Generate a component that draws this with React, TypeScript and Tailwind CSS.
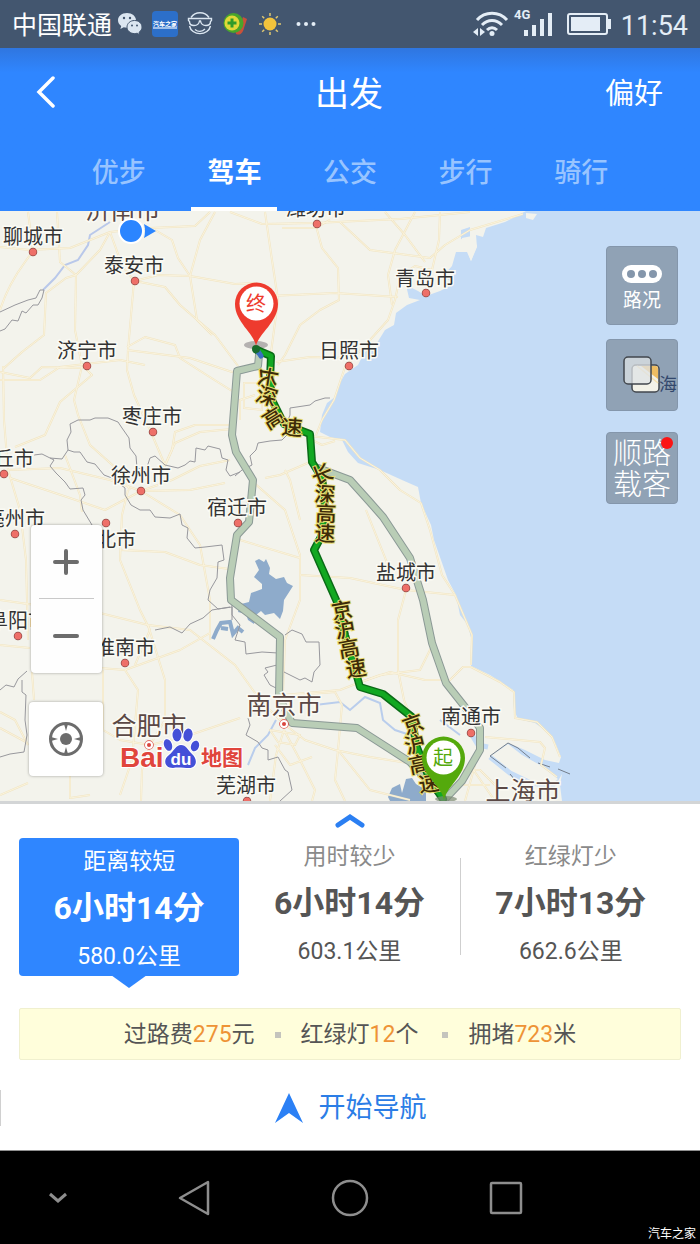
import React, { useState } from "react";
import clsx from "clsx";

const TABS = ["优步", "驾车", "公交", "步行", "骑行"];

const PLANS = [
  { label: "距离较短", time: "6小时14分", distance: "580.0公里" },
  { label: "用时较少", time: "6小时14分", distance: "603.1公里" },
  { label: "红绿灯少", time: "7小时13分", distance: "662.6公里" },
];

// x / y is the middle of the name, dot is the marker below it
const CITIES = [
  { name: "聊城市", x: 33, y: 244, dot: [33, 252] },
  { name: "潍坊市", x: 316, y: 216, dot: [317, 224] },
  { name: "泰安市", x: 134, y: 273, dot: [135, 281] },
  { name: "青岛市", x: 425, y: 286, dot: [426, 293] },
  { name: "日照市", x: 349, y: 358, dot: [349, 366] },
  { name: "济宁市", x: 87, y: 358, dot: [87, 366] },
  { name: "枣庄市", x: 152, y: 424, dot: [153, 432] },
  { name: "商丘市", x: 4, y: 466, dot: [4, 474] },
  { name: "徐州市", x: 141, y: 483, dot: [141, 491] },
  { name: "亳州市", x: 15, y: 526, dot: [15, 534] },
  { name: "宿迁市", x: 237, y: 515, dot: [238, 523] },
  { name: "淮北市", x: 106, y: 547, dot: [106, 523] },
  { name: "盐城市", x: 406, y: 580, dot: [406, 588] },
  { name: "淮南市", x: 125, y: 655, dot: [125, 663] },
  { name: "阜阳市", x: 18, y: 628, dot: [18, 636] },
  { name: "南通市", x: 471, y: 724, dot: [471, 733] },
  { name: "芜湖市", x: 246, y: 793, dot: [247, 801] },
];

const CAPITALS = [
  { name: "济南市", x: 123, y: 219 },
  { name: "南京市", x: 284, y: 714, dot: [284, 724] },
  { name: "合肥市", x: 149, y: 735, dot: [149, 745] },
  { name: "上海市", x: 523, y: 800 },
];

const ROAD_NAMES: [string, number, number, number][] = [
  ["长", 268, 377, 100],
  ["深", 267, 396, 18],
  ["高", 273, 418, -32],
  ["速", 292, 427, 4],
  ["长", 322, 474, -22],
  ["深", 325, 494, 4],
  ["高", 326, 513, 2],
  ["速", 325, 533, 2],
  ["京", 342, 610, -10],
  ["沪", 345, 629, -10],
  ["高", 349, 648, -10],
  ["速", 356, 668, -10],
  ["京", 413, 724, -20],
  ["沪", 415, 744, -14],
  ["高", 419, 764, -12],
  ["速", 429, 783, -8],
];

const ROADS = [
  "M0 247 L30 250 L70 248 L110 232 L150 228 L195 226 L210 212",
  "M0 310 Q8 285 25 262 L33 251 L28 212",
  "M57 212 L60 262 L76 275 L75 330 L82 366 L74 400 L78 415 L90 445 L118 470 L130 490",
  "M110 232 L100 250 L76 275 L66 278 L46 293 L44 335 L22 352 L3 369",
  "M110 232 L122 265 L134 281 L128 350 L127 370 L134 395 L150 430 L165 465",
  "M127 347 L145 337 L175 345 L180 358 L205 374 L232 391",
  "M127 350 L190 358 L232 372 L258 366",
  "M135 281 L165 287 L180 305 L195 318 L215 335 L238 366",
  "M135 281 L158 275 L190 276 L235 284 L255 283",
  "M155 230 L172 240 L178 258 L190 276 L197 320 L212 335",
  "M215 212 L200 240 L190 276",
  "M265 212 L272 260 L278 300 L270 360",
  "M230 212 L262 224 L315 223 L400 219 L470 212",
  "M282 228 L315 228 L330 220",
  "M316 226 L322 248 L338 268 L339 300 L320 310 L300 325 L285 355 L278 365",
  "M270 296 L335 293 L398 297",
  "M440 212 L439 240 L432 270 L415 266 L400 276 L395 300 L388 320 L370 340 L345 367 L334 400 L322 420 L316 435",
  "M340 222 L370 250 L430 258 L445 245 L470 230 L523 214",
  "M385 212 L405 235 L425 262",
  "M415 212 L395 250 L388 275 L392 305",
  "M276 362 L310 357 L345 358",
  "M0 380 L40 380 L60 367 L120 360 L145 365",
  "M0 372 L30 378 L42 367 L85 368 L92 375 L60 402 L45 435 L15 447",
  "M3 366 L4 420 L8 470 L20 510 L26 560 L28 640",
  "M8 470 L60 468 L110 480 L141 491 L172 480 L200 466 L230 460",
  "M10 478 L70 498 L105 510 L141 491 L190 490 L225 483",
  "M65 455 L80 495 L82 512",
  "M232 425 L195 425 L175 432 L172 450 L163 470",
  "M165 465 L175 443 L200 432 L232 429",
  "M141 491 L180 515 L200 545 L210 600 L210 640",
  "M128 490 L122 515 L120 560 L140 610 L150 630 L135 665",
  "M120 550 L165 552 L200 565 L229 569",
  "M0 600 L28 604 L100 613 L148 625 L190 630 L235 665 L260 700 L284 724",
  "M0 645 L30 648 M100 668 L125 670 L180 650 L210 633",
  "M148 625 L165 680 L165 720 L150 745",
  "M125 670 L138 690 L132 760 L120 795 M150 745 L142 770 L141 801",
  "M32 672 L34 700 M70 776 L70 798 L90 795 M0 795 L28 783",
  "M0 728 L26 742 M0 712 L15 720 L28 745",
  "M103 670 L103 730 L120 740 L150 745 L190 735 L240 718",
  "M244 383 L262 383 L262 410 L244 408 Z M255 395 L240 400 L240 420",
  "M310 436 L345 440 L360 458 L380 470 L400 490 L421 503 L430 530 L442 575 L455 595 L472 635 L471 665",
  "M310 462 L280 475 L265 478 M312 440 L322 445 L335 441",
  "M253 482 L285 510 L300 555 L300 600 L285 640 L282 720",
  "M240 540 L300 558 M300 575 L350 578 L406 590 L455 595",
  "M300 520 L290 480 L285 470 M366 510 L380 545 L390 570",
  "M406 590 L398 620 L398 670 L404 700 L420 740",
  "M435 640 L420 670 L380 675 L358 683 L340 690 L283 695",
  "M284 696 L335 692 L342 705 L338 750 L335 780 L345 801",
  "M284 724 L305 740 L335 750 L370 757 L420 765 L445 795",
  "M358 683 L390 672 L425 680 L450 680 L463 667 L471 667",
  "M284 730 L276 755 L270 801 M284 730 L300 760 L315 790 L312 801",
  "M270 730 L300 735 L295 745 L278 742 Z",
  "M338 750 L370 790 L410 800 M312 757 L290 765 L275 745",
  "M471 667 L500 682 L514 692 L515 718 L537 722 L552 737 L560 757",
  "M485 737 L540 742 L545 748 L541 765 L557 777",
  "M455 770 L480 770 L500 790 M450 785 L490 785 M470 765 L495 801 M475 765 L465 801",
];

const BORDERS = [
  "M0 331 L5 329 L12 320 L18 321 L22 311 L26 313 L33 305 L38 305 L42 298 L44 290 L40 290 L36 298 L28 300 L15 305 L0 312",
  "M34 455 L42 454 L50 458 L62 459 L68 450 L67 440 L71 432 L70 424 L78 420 L90 420 L95 418 L108 418 L118 422 L122 428 L129 438 L130 448 L136 456 L137 468 L146 470 L150 458 L155 456 L165 465 L178 468 L185 465 L190 461 L195 462 L196 448 L205 450 L208 446 L220 449 L222 458 L228 460 L226 470 L230 476 L240 472",
  "M50 458 L54 460 L50 466 L56 473 L65 482 L70 489 L83 488 L85 495 L81 500 L83 510 L92 525",
  "M68 450 L74 452 L80 452 L87 462 L95 464 L104 475 L112 478 L125 488 L125 495 L131 505 L140 510 L150 510 L155 517 L170 518 L180 514 L182 525 L188 528 L187 538 L195 548 L205 547 L222 545 L224 560 L218 562 L217 578 L210 590 L208 600 L218 609 L232 607 L232 620",
  "M330 398 L325 398 L315 401 L310 405 L290 408 L290 415 L286 425 L290 432 L282 440 L270 441 L258 443 L256 450 L250 456 L252 465 L242 470 L235 476",
  "M0 690 L6 685 L14 687 L18 679 L27 671 M22 680 L22 692 L26 695 L25 720 L27 735 L24 752 L10 754 L0 757",
  "M232 600 L232 615 L240 625 L235 640 L245 642 L246 654 L262 652 L278 653 M285 635 L292 630 L302 634 L306 642 L319 642 L320 665 L314 672 L312 682 L305 678 L300 680 L284 672",
  "M277 665 L265 668 L268 672 L264 675 L270 685 L280 690 M248 718 L250 725 L246 735 L258 742 L262 748 L268 750 L268 760 L278 757 L285 770 L288 772 L292 790 L280 801",
  "M155 630 L170 627 L182 633 L190 624 L203 618 L212 610 L230 607",
];

function RouteMap() {
  return (
    <svg
      viewBox="0 211 700 590"
      preserveAspectRatio="xMidYMid slice"
      className="absolute inset-0 h-full w-full"
      role="img"
      aria-label="路线地图"
    >
      <rect x="0" y="211" width="700" height="590" fill="#f3f3ec" />

      {/* sea */}
      <path
        fill="#c5dcf6"
        d="M526 211 L505 222 L486 228 L483 237 L476 235 L477 247 L471 261 L467 252 L456 252 L452 266 L443 276 L454 284 L440 291 L426 296 L418 291 L406 285 L409 298 L420 300 L407 305 L396 313 L394 325 L385 330 L377 343 L364 353 L358 365 L345 374 L338 386 L335 397 L327 403 L322 415 L320 432 L330 437 L342 440 L348 452 L358 463 L380 470 L402 480 L418 487 L421 503 L431 525 L434 540 L441 560 L448 580 L456 595 L460 615 L468 625 L472 642 L471 666 L490 675 L513 690 L514 710 L518 719 L535 723 L549 733 L556 745 L561 757 L559 763 L545 760 L525 750 L508 743 L490 757 L505 770 L520 780 L535 786 L553 790 L562 774 L560 785 L562 801 L700 801 L700 211 Z"
      />
      <path fill="#c5dcf6" d="M461 230 L470 227 L470 241 L461 239 Z" />
      <path fill="#f3f3ec" d="M462 238 L472 236 L477 246 L471 261 L467 250 L460 250 Z M526 213 L537 214 L533 220 L526 218 Z" />
      <path fill="#f3f3ec" d="M491 756 L508 744 L522 755 L540 765 L558 779 L550 785 L525 780 L505 770 Z" />
      <path fill="none" stroke="#c5dcf6" strokeWidth="5" d="M488 747 L478 745 L472 735 M490 757 L510 773 L535 785" />
      <path fill="none" stroke="#747f8c" d="M490 756 L508 743 L518 748 L530 758 M490 756 L506 768 M538 763 L550 767 M558 769 L570 774 M510 774 L515 780" />

      {/* rivers and lakes */}
      <path fill="none" stroke="#b9c8ea" strokeWidth="2" d="M43 290 L55 278 L65 265 L78 260 L88 245 L90 235 L110 222" />
      <path fill="none" stroke="#b9cdec" strokeWidth="2" d="M248 765 L255 748 L268 735 L276 720 M315 705 L340 702 L350 710 L365 697 L380 703 L383 720 L395 730 L410 735 M440 720 L460 735" />
      <path
        fill="#8eabcb"
        d="M255 561 L259 559 L264 562 L266 559 L270 568 L269 574 L276 579 L284 577 L287 583 L293 586 L284 600 L283 611 L280 619 L274 613 L265 615 L261 611 L256 615 L254 624 L248 620 L246 614 L238 612 L241 604 L249 602 L251 593 L262 589 L262 584 L254 577 L259 570 Z"
      />
      <path fill="none" stroke="#8eabcb" strokeWidth="4" d="M213 639 L217 630 L221 623 L230 622 L233 634 L238 628 L243 632 M221 628 L228 629" />
      <path fill="#8eabcb" d="M388 797 L392 788 L400 784 L402 793 L406 779 L412 778 L416 784 L426 790 L426 801 L390 801 Z" />

      <g fill="none" strokeLinejoin="round">
        {ROADS.map((d) => (
          <path key={d} d={d} stroke="#f1e5c3" strokeWidth="2" />
        ))}
        {ROADS.map((d) => (
          <path key={d} d={d} stroke="#faf3dd" strokeWidth="1" />
        ))}
        {BORDERS.map((d) => (
          <path key={d} d={d} stroke="#98989d" strokeWidth="1" />
        ))}
      </g>

      <ellipse cx="256" cy="345" rx="12" ry="4" fill="#b4b1b0" />

      {/* alternative routes */}
      <g fill="none" strokeLinejoin="round" strokeLinecap="round">
        {[
          "M259 355 L258 366 L237 371 L232 435 L236 452 L253 480 L249 522 L237 535 L230 578 L231 600 L280 637 L279 697 L292 723 L357 728 L410 762 L444 798",
          "M318 468 L350 480 L368 500 L383 517 L410 558 L423 600 L432 643 L446 683 L465 707 L480 728 L480 750 L462 781 L446 798",
        ].map((d) => (
          <React.Fragment key={d}>
            <path d={d} stroke="#8b9996" strokeWidth="8" />
            <path d={d} stroke="#b9cdb6" strokeWidth="6" />
          </React.Fragment>
        ))}
        {["#0a6b17", "#12a822"].map((color, i) => (
          <path
            key={color}
            stroke={color}
            strokeWidth={i === 0 ? 8 : 5}
            d="M257 350 L271 356 L270 380 L272 400 L284 424 L310 434 L312 462 L322 478 L325 500 L322 535 L314 550 L337 602 L345 635 L358 680 L360 687 L383 694 L412 717 L416 745 L430 780 L443 799"
          />
        ))}
        <path d="M257 350 L261 356" stroke="#3b6fc0" strokeWidth="5" />
      </g>
      <circle cx="256" cy="349" r="4" fill="#176b2b" />

      {/* place names */}
      <g fontSize="20" textAnchor="middle" fill="#333" stroke="#fafaf4" strokeWidth="3" paintOrder="stroke">
        {CITIES.map((c) => (
          <g key={c.name}>
            <circle cx={c.dot[0]} cy={c.dot[1]} r="3.5" fill="#ee6f68" stroke="#8d4a47" strokeWidth="1.5" />
            <text x={c.x} y={c.y}>{c.name}</text>
          </g>
        ))}
      </g>
      <g fontSize="25" textAnchor="middle" fill="#5a4845" stroke="#fafaf4" strokeWidth="3" paintOrder="stroke">
        {CAPITALS.map((c) => (
          <g key={c.name}>
            {c.dot && (
              <>
                <circle cx={c.dot[0]} cy={c.dot[1]} r="4" fill="#fff" stroke="#d9453e" strokeWidth="1.5" />
                <circle cx={c.dot[0]} cy={c.dot[1]} r="2" fill="#d9453e" stroke="none" />
              </>
            )}
            <text x={c.x} y={c.y}>{c.name}</text>
          </g>
        ))}
      </g>
      <text x="668" y="391" fontSize="18" textAnchor="middle" fill="#1b3a74">海</text>

      <g fontSize="21" fontWeight="500" textAnchor="middle" fill="#3d2b08" stroke="#e9dc72" strokeWidth="2" paintOrder="stroke">
        {ROAD_NAMES.map(([char, x, y, angle]) => (
          <text key={`${x}-${y}`} transform={`translate(${x} ${y}) rotate(${angle})`} y="8">
            {char}
          </text>
        ))}
      </g>

      {/* current position */}
      <circle cx="131" cy="231" r="12" fill="#2b85ff" stroke="#fff" strokeWidth="2" />
      <path d="M144 224 L156 231 L144 238 Q146 231 144 224 Z" fill="#2b85ff" />

      {/* end and start pins */}
      <path d="M256 346 C254 333 235 322 235 304 A21.5 21.5 0 0 1 278 304 C278 322 259 333 256 346 Z" fill="#ee3b2e" />
      <circle cx="256.5" cy="303.5" r="17" fill="#fff" />
      <text x="256" y="311" fontSize="20" textAnchor="middle" fill="#ee3b2e">终</text>
      <ellipse cx="446" cy="799" rx="11" ry="3" fill="#7c8a74" opacity=".7" />
      <path d="M444 800 C442 786 422 776 422 758 A21.5 21.5 0 0 1 465 758 C465 776 447 786 444 800 Z" fill="#54a90c" />
      <circle cx="443.5" cy="757.5" r="17" fill="#fff" />
      <text x="443" y="765" fontSize="20" textAnchor="middle" fill="#54a90c">起</text>

      {/* map provider logo */}
      <g stroke="#fff" strokeWidth="2" paintOrder="stroke">
        <g fill="#4450d8">
          <ellipse cx="168" cy="745" rx="4" ry="6" transform="rotate(-20 168 745)" />
          <ellipse cx="177" cy="735" rx="4.500" ry="6.500" />
          <ellipse cx="188" cy="735" rx="4.500" ry="6.500" transform="rotate(12 188 735)" />
          <ellipse cx="195" cy="746" rx="4" ry="5.500" transform="rotate(20 195 746)" />
          <path d="M181 745 C186 745 188 750 192 754 C198 759 197 768 189 768 C184 768 178 767 173 768 C164 768 163 759 169 755 C174 751 176 745 181 745 Z" />
        </g>
        <g fill="#e0453c" fontWeight="700">
          <text x="120" y="767" fontSize="28" fontFamily="Liberation Sans, sans-serif">Bai</text>
          <text x="201" y="765" fontSize="21">地图</text>
        </g>
      </g>
      <text x="181" y="765" fontSize="17" fontWeight="700" textAnchor="middle" fill="#fff" fontFamily="Liberation Sans, sans-serif">
        du
      </text>
    </svg>
  );
}

function StatusBar() {
  return (
    <div className="flex h-12 items-center justify-between bg-[#43566f] pr-3 pl-3 text-[#e4edf6]">
      <div className="flex items-center gap-[9px]">
        <span className="-mr-1 pt-1 text-[25px] leading-8 text-white">中国联通</span>
        <svg width="26" height="24" viewBox="0 0 26 24">
          <path d="M10 1C4.500 1 1 4.300 1 8.300c0 2.400 1.200 4.400 3.200 5.700L3.400 17l3.300-1.700c1 .3 2 .4 3.300.4 5 0 9-3.200 9-7.400S15 1 10 1z" fill="#dbe6f1" />
          <circle cx="7" cy="6" r="1.200" fill="#43566f" />
          <circle cx="13" cy="6" r="1.200" fill="#43566f" />
          <path d="M17.500 8.500c-4.200 0-7.500 2.900-7.500 6.600 0 3.600 3.300 6.500 7.500 6.500.9 0 1.800-.1 2.600-.4l2.700 1.500-.7-2.500c1.800-1.200 2.900-3 2.900-5.100 0-3.700-3.300-6.600-7.500-6.600z" fill="#dbe6f1" stroke="#43566f" />
          <circle cx="15" cy="13.500" r="1" fill="#43566f" />
          <circle cx="20" cy="13.500" r="1" fill="#43566f" />
        </svg>
        <span className="flex h-[26px] w-[26px] flex-col items-center justify-center overflow-hidden rounded-sm bg-[#2c6fc9] text-[6px] leading-[7px] font-bold text-white">
          汽车之家
          <span className="h-[2px] w-6 bg-[#9fc0ea]" />
        </span>
        <svg width="26" height="26" viewBox="0 0 26 26" fill="none" stroke="#dbe6f1" strokeWidth="1.400">
          <path d="M4 6.500a11 11 0 0 1 18 0M2.500 15a10.700 9.500 0 0 0 21 0" />
          <path d="M1.500 7.500h23v2l-1 1c0 3-2 4-4.500 4S14 13 13.500 10h-1C12 13 10 14.500 7 14.500S2.500 13.500 2.500 10.500l-1-1z" />
          <path d="M8 18.500c3 2.500 7 2.500 10-.5" />
        </svg>
        <svg width="26" height="26" viewBox="0 0 26 26">
          <path d="M14 23c5 2 7-2 8-6l3-9-4-2-3 9-5 3z" fill="#c9513a" />
          <circle cx="11.500" cy="12" r="10" fill="#49a52b" />
          <circle cx="10" cy="12" r="7.500" fill="#e0d838" />
          <path d="M8.500 7.500h3v3h3v3h-3v3h-3v-3h-3v-3h3z" fill="#2e9b2a" />
        </svg>
        <svg width="26" height="26" viewBox="0 0 26 26" stroke="#e0c872" strokeWidth="1.500">
          <circle cx="13" cy="13" r="6.500" fill="#f3c33c" stroke="none" />
          <path d="M13 2v3M13 21v3M2 13h3M21 13h3M5.200 5.200l2 2M18.800 18.800l2 2M5.200 20.800l2-2M18.800 7.200l2-2" />
        </svg>
        <svg width="20" height="6" viewBox="0 0 20 6" className="ml-1" fill="currentColor">
          <circle cx="2.500" cy="3" r="2" />
          <circle cx="10" cy="3" r="2" />
          <circle cx="17.500" cy="3" r="2" />
        </svg>
      </div>
      <div className="flex items-center">
        <svg width="36" height="26" viewBox="0 0 36 26" fill="none" stroke="currentColor" strokeWidth="3">
          <path d="M4 9c8-9 22-9 30 0M9 14c6-6 14-6 20 0M14 19c3-3 7-3 10 0" />
          <circle cx="19" cy="22.500" r="2.500" fill="currentColor" stroke="none" />
          <path d="M5 17v8l-5-4zM7 17v8l5-4z" fill="currentColor" stroke="none" />
        </svg>
        <svg width="40" height="30" viewBox="0 0 40 30" className="ml-1 -mt-1" fill="currentColor">
          <text x="1" y="12" fontSize="13" fontWeight="700">4G</text>
          <rect x="11" y="23" width="4" height="6" />
          <rect x="19" y="18" width="4" height="11" />
          <rect x="27" y="12" width="4" height="17" />
          <rect x="35" y="6" width="4" height="23" />
        </svg>
        <svg width="44" height="22" viewBox="0 0 44 22" className="ml-[14px]">
          <rect x="1" y="1" width="39" height="20" rx="2" fill="none" stroke="currentColor" strokeWidth="2" />
          <rect x="4" y="4" width="29" height="14" fill="currentColor" />
          <rect x="41" y="6" width="3" height="10" fill="currentColor" />
        </svg>
        <span className="ml-[10px] pt-[3px] text-[27px] leading-8">11:54</span>
      </div>
    </div>
  );
}

const mapButton =
  "flex w-[72px] flex-col items-center justify-center rounded-[4px] border border-[#8496ab] bg-[#505b66]/45 text-white";

export default function App() {
  const [tab, setTab] = useState(1);
  const [plan, setPlan] = useState(0);

  return (
    <div className="flex min-h-screen flex-col bg-white font-[Roboto,'Noto_Sans_CJK_SC',sans-serif]">
      <StatusBar />

      <header className="bg-[#2f86ff] bg-linear-to-b from-[#2f76e0] via-[#2f86ff] via-15% to-[#2f86ff] text-white">
        <div className="grid h-[90px] grid-cols-3 items-center pr-[37px] pl-[31px]">
          <button aria-label="返回" className="justify-self-start">
            <svg width="28" height="34" viewBox="0 0 28 34" fill="none" stroke="currentColor" strokeWidth="3.500">
              <path d="M22 2 L8 16 L22 30" strokeLinecap="round" />
            </svg>
          </button>
          <h1 className="pt-[2px] pl-1 text-center text-[34px] leading-10">出发</h1>
          <button className="justify-self-end pt-[2px] text-[29px] leading-10">偏好</button>
        </div>
        <nav className="grid grid-cols-5 px-[61px]">
          {TABS.map((name, i) => (
            <button
              key={name}
              onClick={() => setTab(i)}
              className={clsx(
                "h-[73px] justify-self-center border-b-4 px-4 text-[27px] leading-8",
                i === tab ? "border-white font-bold text-white" : "border-transparent font-medium text-[#98c4ff]"
              )}
            >
              {name}
            </button>
          ))}
        </nav>
      </header>

      <main className="relative min-h-[500px] flex-1 overflow-hidden border-b-[3px] border-[#d3d5d6]">
        <RouteMap />

        {/* right side tools */}
        <div className="absolute top-[35px] right-[22px] flex flex-col">
          <button className={clsx(mapButton, "h-[79px] gap-1 pt-2 text-[19px] leading-7")}>
            <svg width="40" height="18" viewBox="0 0 40 18">
              <rect width="40" height="18" rx="9" fill="#fff" />
              <g fill="#8496ab">
                <circle cx="9" cy="9" r="4" />
                <circle cx="20" cy="9" r="4" />
                <circle cx="31" cy="9" r="4" />
              </g>
            </svg>
            路况
          </button>
          <button aria-label="图层" className={clsx(mapButton, "mt-[14px] h-[72px]")}>
            <svg width="38" height="38" viewBox="0 0 38 38" stroke="#42474d" strokeWidth="1.500">
              <rect x="9" y="9" width="27" height="27" rx="4" fill="#f3f2e8" />
              <path d="M18 10 L33 10 Q35 10 35 13 L35 23 Z" fill="#eebd62" stroke="none" />
              <path d="M14 10 L35 27" stroke="#f6e1ae" />
              <rect x="1" y="1" width="27" height="27" rx="4" fill="#dfe3e6" fillOpacity=".75" />
            </svg>
          </button>
          <button className={clsx(mapButton, "relative mt-[21px] h-[72px] pt-1 text-[29px] leading-[31px] font-light text-[#e6edf5]")}>
            <span>顺路</span>
            <span>载客</span>
            <span className="absolute top-1 right-1 h-3 w-3 rounded-full bg-[#fb1414]" />
          </button>
        </div>

        {/* zoom and locate */}
        <div className="absolute bottom-[25px] left-[29px] flex flex-col items-center gap-[29px]">
          <div className="flex w-[71px] flex-col items-center rounded-[4px] bg-[#fefefe] text-[#6c6c6c] shadow-[0_0_3px_rgba(0,0,0,0.35)]">
            <button aria-label="放大" className="flex h-[73px] w-full items-center justify-center">
              <svg width="28" height="28" viewBox="0 0 28 28" stroke="currentColor" strokeWidth="4" strokeLinecap="round">
                <path d="M3 14H25M14 3V25" />
              </svg>
            </button>
            <span className="h-px w-[55px] bg-[#c9c9c9]" />
            <button aria-label="缩小" className="flex h-[74px] w-full items-center justify-center">
              <svg width="28" height="28" viewBox="0 0 28 28" stroke="currentColor" strokeWidth="4" strokeLinecap="round">
                <path d="M3 14H25" />
              </svg>
            </button>
          </div>
          <button
            aria-label="定位"
            className="flex h-[74px] w-[74px] items-center justify-center rounded-[4px] bg-white text-[#6c6c6c] shadow-[0_0_3px_rgba(0,0,0,0.35)]"
          >
            <svg width="36" height="36" viewBox="0 0 36 36" fill="none" stroke="currentColor" strokeWidth="3">
              <circle cx="18" cy="18" r="15.500" />
              <circle cx="18" cy="18" r="6" fill="currentColor" stroke="none" />
              <path d="M16 3H20L18 10ZM16 33H20L18 26ZM3 16V20L10 18ZM33 16V20L26 18Z" fill="currentColor" stroke="none" />
            </svg>
          </button>
        </div>
      </main>

      <section className="flex flex-col bg-white pb-5">
        <button aria-label="展开详情" className="flex h-[34px] items-center justify-center text-[#2b7ff2]">
          <svg width="32" height="16" viewBox="0 0 32 16" fill="none" stroke="currentColor" strokeWidth="5" strokeLinecap="round">
            <path d="M4 12 L16 4 L28 12" />
          </svg>
        </button>

        <div className="flex items-start px-[19px]">
          {PLANS.map((p, i) => {
            const active = i === plan;
            return (
              <React.Fragment key={p.label}>
                {i === 2 && <span className="mt-5 h-[97px] w-px bg-[#cfcfcf]" />}
                <button
                  onClick={() => setPlan(i)}
                  className={clsx(
                    "relative flex h-[138px] flex-1 flex-col items-center rounded-[4px] text-[23px]",
                    active ? "bg-[#2f86ff] pt-[9px] text-white" : "pt-1 text-[#555]"
                  )}
                >
                  <span className={clsx("leading-[30px]", !active && "text-[#8a8a8a]")}>{p.label}</span>
                  <span className="mt-2 text-[32px] leading-[46px] font-bold">{p.time}</span>
                  <span className="mt-[9px] leading-[34px]">{p.distance}</span>
                  {active && (
                    <svg width="36" height="13" viewBox="0 0 36 13" className="absolute top-full left-1/2 -mt-px -ml-[18px]">
                      <path d="M0 0H36L18 13Z" fill="#2f86ff" />
                    </svg>
                  )}
                </button>
              </React.Fragment>
            );
          })}
        </div>

        <div className="mx-[19px] mt-8 flex h-[52px] items-center justify-center gap-5 rounded-[2px] border border-[#f0f0cf] bg-[#fffedb] pt-[2px] text-[23px] text-[#555]">
          <span>过路费<b className="font-normal text-[#ee9336]">275</b>元</span>
          <i className="h-[6px] w-[6px] bg-[#c4c4bd]" />
          <span>红绿灯<b className="font-normal text-[#ee9336]">12</b>个</span>
          <i className="ml-1 h-[6px] w-[6px] bg-[#c4c4bd]" />
          <span>拥堵<b className="font-normal text-[#ee9336]">723</b>米</span>
        </div>

        <div className="mt-[26px] flex h-11 items-center">
          <span className="h-9 w-px bg-[#d0d0d0]" />
          <button className="flex flex-1 items-center justify-center gap-4 text-[27px] leading-9 text-[#2b7de6]">
            <svg width="28" height="30" viewBox="0 0 28 30" fill="#2b80f5">
              <path d="M14 0 L28 30 L14 20 L0 30 Z" />
            </svg>
            开始导航
          </button>
        </div>
      </section>

      <footer className="grid h-[94px] grid-cols-[116px_1fr_1fr_1fr_116px] items-center justify-items-center border-t border-[#8f8f8f] bg-black text-[#8e8e8e]">
        <button aria-label="收起">
          <svg width="20" height="12" viewBox="0 0 20 12" fill="none" stroke="currentColor" strokeWidth="3">
            <path d="M2 2 L10 9 L18 2" />
          </svg>
        </button>
        <button aria-label="返回键">
          <svg width="32" height="36" viewBox="0 0 32 36" fill="none" stroke="currentColor" strokeWidth="2.500" strokeLinejoin="round">
            <path d="M2 18 L30 2 V34 Z" />
          </svg>
        </button>
        <button aria-label="主屏幕">
          <svg width="38" height="38" viewBox="0 0 38 38" fill="none" stroke="currentColor" strokeWidth="2.500">
            <circle cx="19" cy="19" r="17" />
          </svg>
        </button>
        <button aria-label="最近任务">
          <svg width="34" height="34" viewBox="0 0 34 34" fill="none" stroke="currentColor" strokeWidth="2.500">
            <rect x="2" y="2" width="30" height="30" rx="1" />
          </svg>
        </button>
        <span className="self-end justify-self-end pr-1 pb-[2px] text-[12px] leading-4 text-white">汽车之家</span>
      </footer>
    </div>
  );
}
